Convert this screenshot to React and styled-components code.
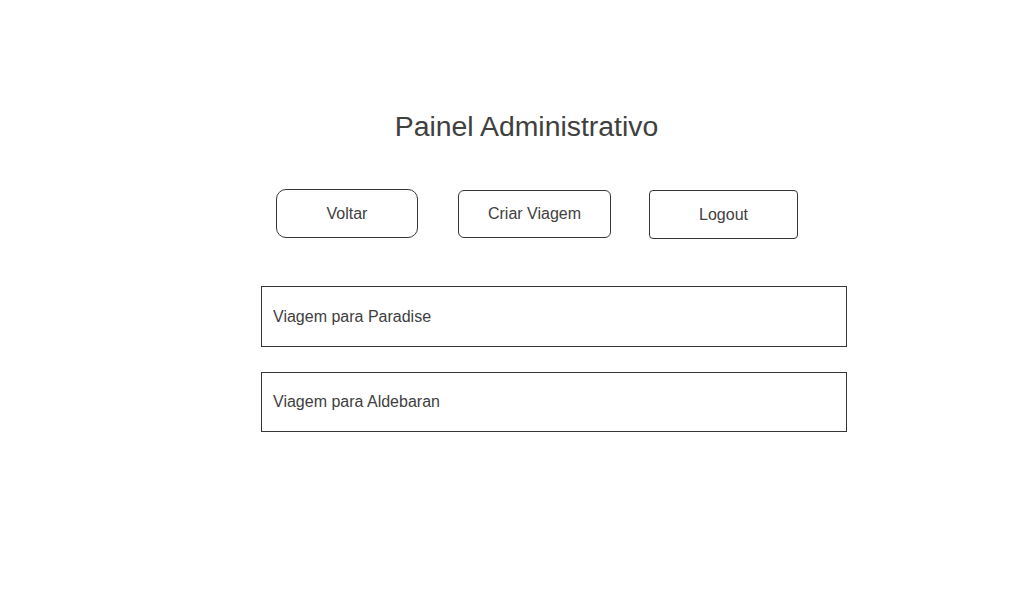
import React from "react";
import styled, { createGlobalStyle } from "styled-components";

const GlobalStyle = createGlobalStyle`
  html, body {
    margin: 0;
    padding: 0;
    background: #ffffff;
  }
  body {
    font-family: "Liberation Sans", Arial, sans-serif;
    color: #333333;
  }
`;

const Page = styled.main`
  width: 586px;
  margin-left: 261px;
  padding-top: 110px;
  display: flex;
  flex-direction: column;
`;

const Title = styled.h1`
  margin: 0;
  padding-right: 55px;
  font-size: 28.4px;
  font-weight: 400;
  line-height: 32px;
  text-align: center;
  color: #404040;
`;

const Toolbar = styled.nav`
  display: flex;
  align-items: flex-start;
  margin-top: 47px;
  padding-left: 15px;
`;

const Button = styled.button`
  box-sizing: border-box;
  width: ${(p) => p.$width}px;
  height: ${(p) => p.$height}px;
  margin-top: ${(p) => p.$offset || 0}px;
  margin-right: ${(p) => p.$gap || 0}px;
  border: 1px solid #363636;
  border-radius: ${(p) => p.$radius}px;
  background: #ffffff;
  font-family: "Liberation Sans", Arial, sans-serif;
  font-size: 16px;
  color: #404040;
  padding: 0;
  cursor: pointer;
`;

const TripList = styled.ul`
  list-style: none;
  margin: 47px 0 0 0;
  padding: 0;
  display: flex;
  flex-direction: column;
  gap: 25px;
`;

const TripItem = styled.li`
  box-sizing: border-box;
  height: ${(p) => p.$height}px;
  border: 1px solid #363636;
  display: flex;
  align-items: center;
  padding-left: 11px;
  font-size: 16px;
  color: #404040;
`;

const TRIPS = [
  { id: 1, name: "Viagem para Paradise", height: 61 },
  { id: 2, name: "Viagem para Aldebaran", height: 60 },
];

export default function App() {
  return (
    <>
      <GlobalStyle />
      <Page>
        <Title>Painel Administrativo</Title>

        <Toolbar>
          <Button $width={142} $height={49} $radius={10} $gap={40}>
            Voltar
          </Button>
          <Button $width={153} $height={48} $radius={6} $gap={38} $offset={1}>
            Criar Viagem
          </Button>
          <Button $width={149} $height={49} $radius={4} $offset={1}>
            Logout
          </Button>
        </Toolbar>

        <TripList>
          {TRIPS.map((trip) => (
            <TripItem key={trip.id} $height={trip.height}>
              {trip.name}
            </TripItem>
          ))}
        </TripList>
      </Page>
    </>
  );
}
